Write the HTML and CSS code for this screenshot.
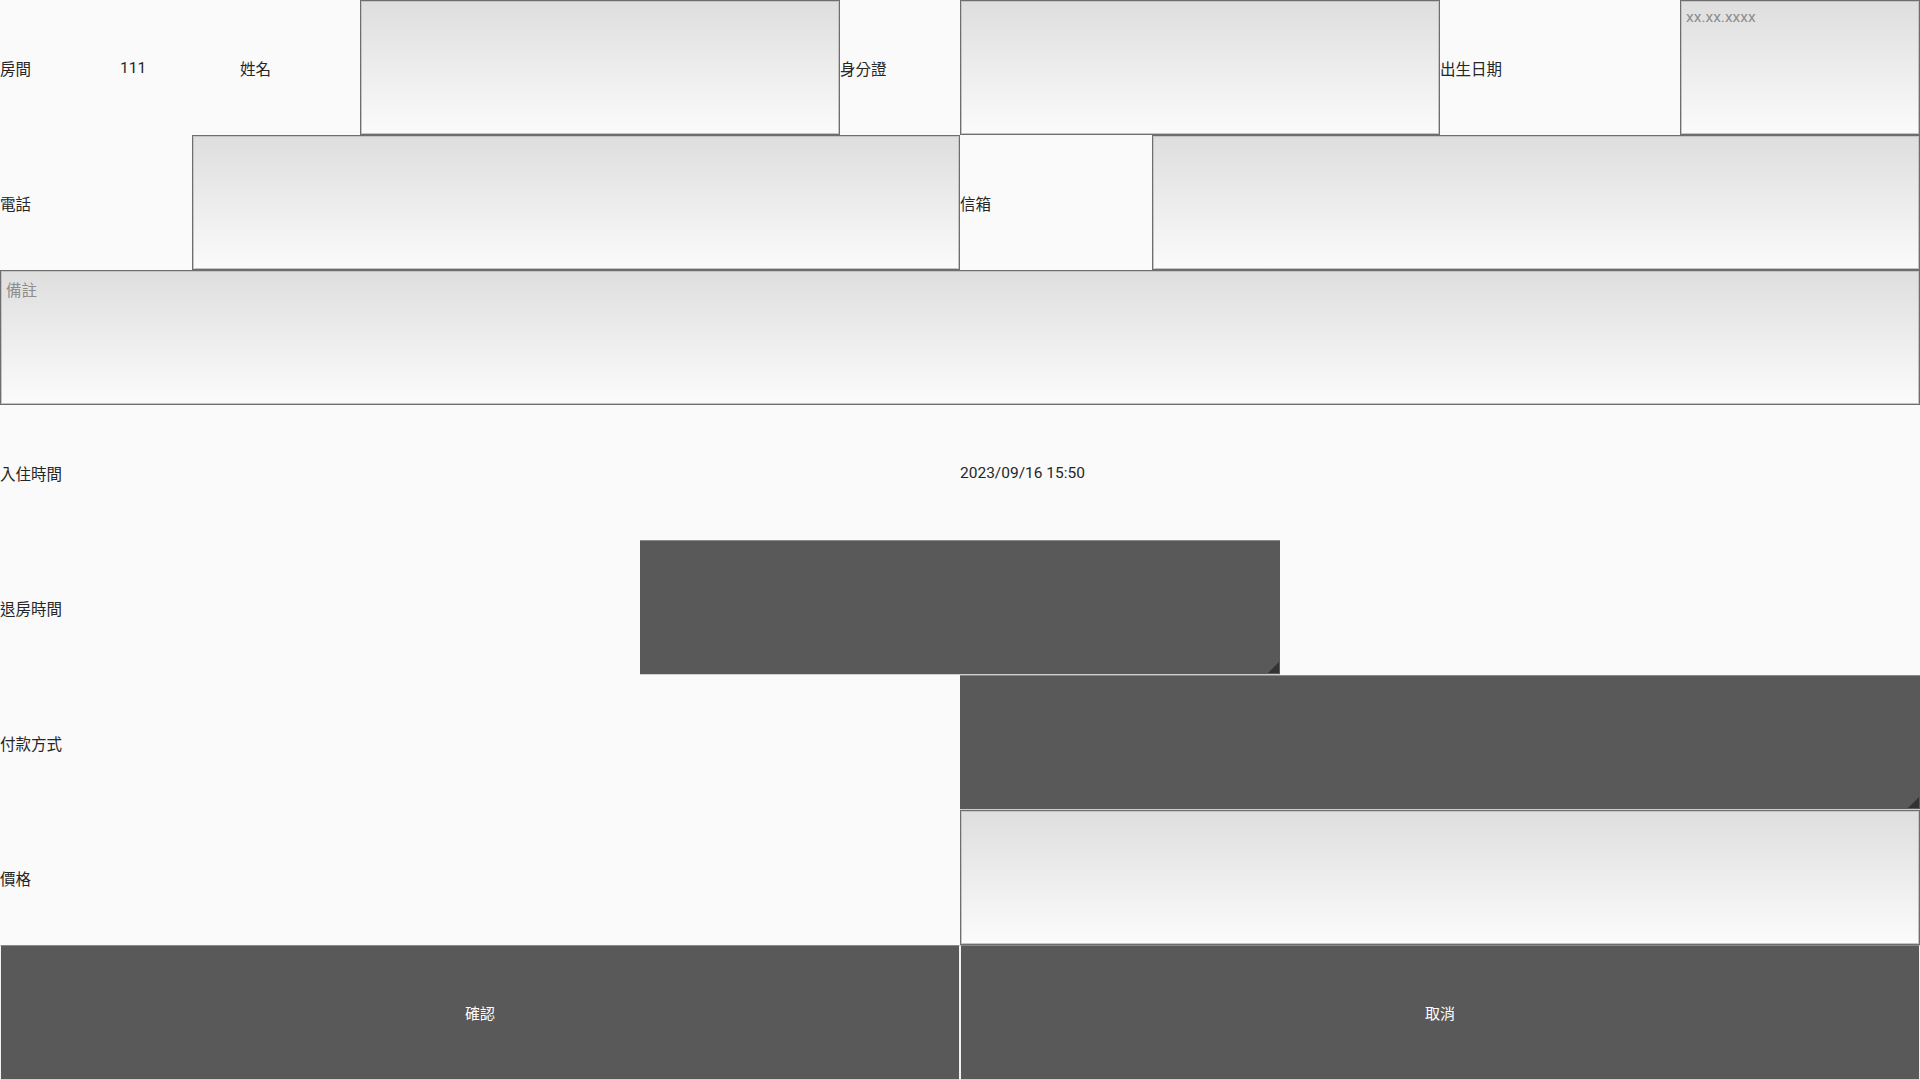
FILE: index.html
```html
<!DOCTYPE html>
<html lang="zh-Hant">
<head>
<meta charset="utf-8">
<title>入住登記</title>
<link rel="stylesheet" href="styles.css">
</head>
<body>
<div class="form">
  <div class="row row-top">
    <div class="lbl">房間</div>
    <div class="lbl">111</div>
    <div class="lbl">姓名</div>
    <textarea class="field"></textarea>
    <div class="lbl">身分證</div>
    <textarea class="field"></textarea>
    <div class="lbl">出生日期</div>
    <textarea class="field" placeholder="xx.xx.xxxx"></textarea>
  </div>
  <div class="row row-contact">
    <div class="lbl">電話</div>
    <textarea class="field"></textarea>
    <div class="lbl">信箱</div>
    <textarea class="field"></textarea>
  </div>
  <div class="row row-one">
    <textarea class="field" placeholder="備註"></textarea>
  </div>
  <div class="row row-two">
    <div class="lbl">入住時間</div>
    <div class="lbl">2023/09/16 15:50</div>
  </div>
  <div class="row row-three">
    <div class="lbl">退房時間</div>
    <button class="spinner"></button>
    <div></div>
  </div>
  <div class="row row-two">
    <div class="lbl">付款方式</div>
    <button class="spinner"></button>
  </div>
  <div class="row row-two">
    <div class="lbl">價格</div>
    <textarea class="field"></textarea>
  </div>
  <div class="row row-two">
    <button class="btn">確認</button>
    <button class="btn">取消</button>
  </div>
</div>
</body>
</html>
```
FILE: styles.css
```css
html, body {
  margin: 0;
  padding: 0;
  width: 1920px;
  height: 1080px;
  overflow: hidden;
  background: #fafafa;
  font-family: Roboto, "Noto Sans CJK TC", sans-serif;
  font-size: 15.5px;
  color: #262626;
}

.form {
  display: grid;
  grid-template-rows: repeat(8, minmax(0, 1fr));
  width: 1920px;
  height: 1080px;
}

.row {
  display: grid;
  min-height: 0;
}

.row > * {
  min-width: 0;
}

.row-top {
  grid-template-columns:
    minmax(0, 1fr) minmax(0, 1fr) minmax(0, 1fr) minmax(0, 4fr)
    minmax(0, 1fr) minmax(0, 4fr) minmax(0, 2fr) minmax(0, 2fr);
}

.row-contact {
  grid-template-columns: minmax(0, 1fr) minmax(0, 4fr) minmax(0, 1fr) minmax(0, 4fr);
}

.row-one {
  grid-template-columns: minmax(0, 1fr);
}

.row-two {
  grid-template-columns: minmax(0, 1fr) minmax(0, 1fr);
}

.row-three {
  grid-template-columns: minmax(0, 1fr) minmax(0, 1fr) minmax(0, 1fr);
}

.lbl {
  display: flex;
  align-items: center;
  white-space: nowrap;
}

.field {
  box-sizing: border-box;
  margin: 0;
  width: 100%;
  height: 100%;
  resize: none;
  border: 1px solid #6e6e6e;
  box-shadow: inset 0 0 0 1px #c4c4c4;
  background: linear-gradient(#dedede, #fbfbfb);
  padding: 7px 5px;
  font-family: Roboto, "Noto Sans CJK TC", sans-serif;
  font-size: 15.5px;
  color: #262626;
  outline: none;
}

.field::placeholder {
  color: #8c8c8c;
  opacity: 1;
}

.spinner {
  position: relative;
  box-sizing: border-box;
  margin: 0;
  width: 100%;
  height: 100%;
  background: #595959;
  border: none;
  border-top: 1px solid #8a8a8a;
  border-bottom: 1px solid #d0d0d0;
  padding: 0;
}

.spinner::after {
  content: "";
  position: absolute;
  right: 1px;
  bottom: 1px;
  width: 11px;
  height: 11px;
  background: #333333;
  clip-path: polygon(100% 0, 100% 100%, 0 100%);
}

.btn {
  box-sizing: border-box;
  margin: 0;
  width: 100%;
  height: 100%;
  background: #595959;
  color: #ffffff;
  border: none;
  border-top: 1px solid #8a8a8a;
  border-bottom: 1px solid #d0d0d0;
  border-left: 1px solid #f2f2f2;
  border-right: 1px solid #f2f2f2;
  font-family: Roboto, "Noto Sans CJK TC", sans-serif;
  font-size: 15px;
  padding: 0;
}
```
